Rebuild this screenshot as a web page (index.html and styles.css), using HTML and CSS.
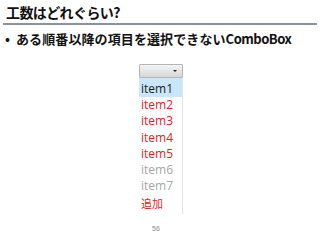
FILE: index.html
```html
<!DOCTYPE html>
<html lang="ja">
<head>
<meta charset="utf-8">
<link rel="stylesheet" href="styles.css">
</head>
<body>
<div class="slide">
  <div class="title">工数はどれぐらい?</div>
  <div class="bullet"><span class="dot">•</span><span class="btext">ある順番以降の項目を選択できない<span class="latin">ComboBox</span></span></div>
  <div class="combo">
    <div class="combo-head"><span class="arrow"></span></div>
    <ul class="list">
      <li class="item sel">item1</li>
      <li class="item red">item2</li>
      <li class="item red">item3</li>
      <li class="item red">item4</li>
      <li class="item red">item5</li>
      <li class="item gray">item6</li>
      <li class="item gray">item7</li>
      <li class="item red add">追加</li>
    </ul>
  </div>
  <div class="page">56</div>
</div>
</body>
</html>
```
FILE: styles.css
```css
html, body {
  margin: 0;
  padding: 0;
  background: #ffffff;
}
.slide {
  width: 320px;
  height: 240px;
  display: flex;
  flex-direction: column;
  font-family: "Noto Sans CJK JP", "Noto Sans", sans-serif;
  color: #111;
}
.title {
  margin: 0 3px;
  padding: 4px 0 2px 3px;
  font-size: 14px;
  line-height: 17px;
  font-weight: 700;
  border-bottom: 2px solid #8a94a0;
  letter-spacing: -0.6px;
}
.bullet {
  margin-top: 6px;
  padding-left: 5px;
  display: flex;
  align-items: center;
  font-size: 13px;
  line-height: 16px;
  font-weight: 700;
}
.dot {
  width: 11px;
}
.btext {
  letter-spacing: 0.1px;
}
.latin {
  letter-spacing: -0.5px;
}
.combo {
  margin-top: 17px;
  margin-left: 139px;
  width: 44px;
}
.combo-head {
  height: 12px;
  border: 1px solid #b4b4b4;
  border-radius: 1px;
  background: linear-gradient(#f4f4f4, #d6d6d6);
  display: flex;
  justify-content: flex-end;
  align-items: center;
}
.arrow {
  width: 0;
  height: 0;
  margin-right: 5px;
  border-left: 2px solid transparent;
  border-right: 2px solid transparent;
  border-top: 2px solid #222;
}
.list {
  list-style: none;
  margin: 0;
  padding: 0 0 3px 0;
  border-right: 1px solid #e4e4e4;
  width: 43px;
}
.item {
  height: 16.3px;
  line-height: 16.3px;
  padding-left: 2px;
  font-family: "Open Sans", "Noto Sans", sans-serif;
  font-size: 12px;
}
.sel {
  background: #c9e6fb;
  color: #1a1a1a;
  height: 19px;
  line-height: 21px;
}
.red {
  color: #d92525;
}
.gray {
  color: #a6a6a6;
}
.add {
  font-family: "Noto Sans CJK JP", sans-serif;
  font-size: 11px;
}
.page {
  margin-top: 11px;
  margin-left: 152px;
  font-family: "Liberation Sans", sans-serif;
  font-size: 7px;
  color: #8a8a8a;
}
```
